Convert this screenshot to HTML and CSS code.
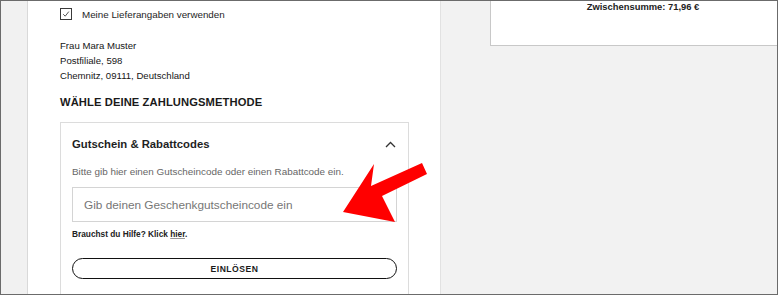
FILE: index.html
```html
<!DOCTYPE html>
<html lang="de">
<head>
<meta charset="utf-8">
<title>Zahlung</title>
<link rel="stylesheet" href="styles.css">
</head>
<body>
<div class="frame">
  <div class="gutter"></div>
  <div class="main">
    <div class="check-row">
      <span class="checkbox">
        <svg width="10" height="10" viewBox="0 0 10 10"><path d="M2.2 5.2 L4.2 7.2 L7.8 2.6" fill="none" stroke="#555" stroke-width="1"/></svg>
      </span>
      <span class="check-label">Meine Lieferangaben verwenden</span>
    </div>
    <div class="address">
      <div>Frau Mara Muster</div>
      <div>Postfiliale, 598</div>
      <div>Chemnitz, 09111, Deutschland</div>
    </div>
    <h2 class="heading">WÄHLE DEINE ZAHLUNGSMETHODE</h2>
    <div class="card">
      <div class="card-head">
        <span class="card-title">Gutschein &amp; Rabattcodes</span>
        <svg class="chevron" width="11" height="7" viewBox="0 0 11 7"><path d="M1 6 L5.5 1.5 L10 6" fill="none" stroke="#333" stroke-width="1.3"/></svg>
      </div>
      <div class="card-body">
        <p class="desc">Bitte gib hier einen Gutscheincode oder einen Rabattcode ein.</p>
        <div class="input">Gib deinen Geschenkgutscheincode ein</div>
        <p class="help">Brauchst du Hilfe? Klick <a href="#">hier</a>.</p>
        <button class="redeem">EINLÖSEN</button>
      </div>
    </div>
  </div>
  <div class="aside">
    <div class="summary">Zwischensumme: 71,96 €</div>
  </div>
  <svg class="arrow" width="778" height="295" viewBox="0 0 778 295">
    <polygon points="342,211 373,163 370,185 421,162 426,173 381,195 394,221" fill="#ff0000"/>
  </svg>
</div>
</body>
</html>
```

FILE: styles.css
```css
* { box-sizing: border-box; }
html, body { margin: 0; padding: 0; }
body {
  font-family: "Liberation Sans", Arial, sans-serif;
  color: #1b1b1b;
  width: 778px;
  height: 295px;
  overflow: hidden;
}
.frame {
  position: relative;
  width: 778px;
  height: 295px;
  border: 1px solid #6b6b6b;
  display: flex;
  overflow: hidden;
  background: #f2f2f2;
}
.gutter {
  width: 27px;
  flex: none;
  background: #f1f1f1;
  border-right: 1px solid #d9d9d9;
}
.main {
  width: 413px;
  flex: none;
  background: #fff;
  border-right: 1px solid #e2e2e2;
  padding-left: 32px;
}
.aside {
  flex: 1;
  padding-left: 49px;
}
.summary {
  height: 45px;
  background: #fff;
  border-left: 1px solid #c8c8c8;
  border-bottom: 1px solid #c8c8c8;
  font-size: 9.4px;
  line-height: 12px;
  text-align: center;
  padding-left: 18px;
  color: #222;
  font-weight: 700;
}
.check-row {
  margin-top: 7px;
  display: flex;
  align-items: center;
  gap: 10px;
  height: 12px;
}
.checkbox {
  width: 12px;
  height: 12px;
  border: 1px solid #3a3a3a;
  display: flex;
  align-items: center;
  justify-content: center;
}
.check-label {
  font-size: 9.8px;
  color: #1e1e1e;
}
.address {
  margin-top: 18px;
  font-size: 9.6px;
  line-height: 15px;
  color: #161616;
}
.heading {
  margin: 11px 0 0;
  font-size: 11.2px;
  line-height: 16px;
  font-weight: 700;
  color: #1a1a1a;
  letter-spacing: 0.1px;
}
.card {
  margin-top: 12px;
  width: 349px;
  height: 200px;
  border: 1px solid #dcdcdc;
  padding: 0 11px;
}
.card-head {
  height: 41px;
  padding-top: 1px;
  display: flex;
  align-items: center;
  justify-content: space-between;
}
.card-title {
  font-size: 11.3px;
  font-weight: 700;
  color: #1f1f1f;
}
.chevron {
  margin-right: 1px;
}
.desc {
  margin: 1px 0 0;
  font-size: 9.9px;
  line-height: 14px;
  color: #666;
}
.input {
  margin-top: 8px;
  height: 35px;
  border: 1px solid #d4d4d4;
  padding-left: 11px;
  display: flex;
  align-items: center;
  font-size: 11.8px;
  color: #767676;
}
.help {
  margin: 6px 0 0;
  font-size: 8.3px;
  line-height: 12px;
  font-weight: 700;
  color: #222;
}
.help a {
  color: #222;
  text-decoration: underline;
  text-decoration-color: #999;
}
.redeem {
  margin-top: 18px;
  width: 100%;
  height: 21px;
  border: 1.5px solid #111;
  border-radius: 11px;
  background: #fff;
  font-family: "Liberation Sans", Arial, sans-serif;
  font-size: 8.6px;
  font-weight: 700;
  letter-spacing: 0.5px;
  color: #1a1a1a;
  padding: 0;
}
.arrow {
  position: absolute;
  top: 0;
  left: 0;
  pointer-events: none;
}
```
